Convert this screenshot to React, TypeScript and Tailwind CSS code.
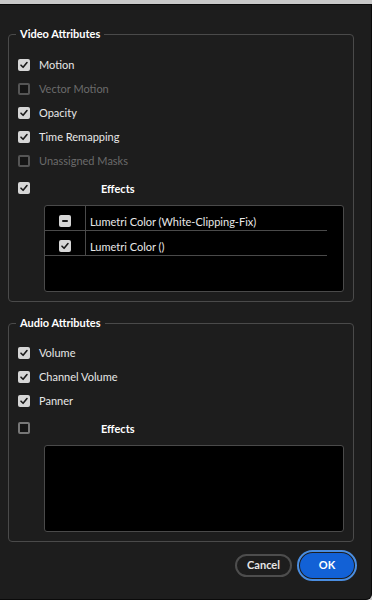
import React from "react";

type BoxState = "on" | "off" | "disabled" | "mixed";

function Box({ state }: { state: BoxState }) {
  if (state === "on" || state === "mixed") {
    return (
      <span className="flex h-[12px] w-[12px] shrink-0 items-center justify-center rounded-[2px] bg-[#d6d6d6]">
        {state === "on" ? (
          <svg width="10" height="10" viewBox="0 0 10 10" fill="none" aria-hidden="true">
            <path d="M2 5.2 L4.1 7.3 L8 2.6" stroke="#1a1a1a" strokeWidth="1.6" strokeLinecap="round" strokeLinejoin="round" />
          </svg>
        ) : (
          <span className="h-[2px] w-[6px] rounded-[1px] bg-[#1a1a1a]" />
        )}
      </span>
    );
  }
  return (
    <span
      className={
        state === "disabled"
          ? "h-[12px] w-[12px] shrink-0 rounded-[2px] border-2 border-[#555] bg-[#151515]"
          : "h-[12px] w-[12px] shrink-0 rounded-[2px] border-2 border-[#777] bg-[#151515]"
      }
    />
  );
}

function Row({ label, state }: { label: string; state: BoxState }) {
  return (
    <div className="flex h-[24px] items-center gap-[9px]">
      <Box state={state} />
      <span className={state === "disabled" ? "text-[#6b6b6b]" : "text-[#e8e8e8]"}>{label}</span>
    </div>
  );
}

function EffectsList({ items }: { items: { name: string; state: BoxState }[] }) {
  return (
    <div className="ml-[26px] mt-[5px] h-[87px] w-[300px] rounded-[3px] border border-[#4a4a4a] bg-black">
      {items.map((it) => (
        <div key={it.name} className="flex h-[25px] w-[282px] border-b border-[#4a4a4a]">
          <div className="flex w-[41px] justify-center border-r border-[#4a4a4a] pt-[9px]">
            <Box state={it.state} />
          </div>
          <div className="pl-[4px] pt-[8px] leading-[16px] text-[#e8e8e8]">{it.name}</div>
        </div>
      ))}
    </div>
  );
}

function Group({
  title,
  rows,
  effectsState,
  effects,
  first,
}: {
  title: string;
  rows: { label: string; state: BoxState }[];
  effectsState: BoxState;
  effects: { name: string; state: BoxState }[];
  first?: boolean;
}) {
  return (
    <fieldset
      className={
        "w-[346px] rounded-[4px] border border-[#4a4a4a] pb-[9px] pl-[9px] " +
        (first ? "mt-[21px]" : "mt-[13px]")
      }
    >
      <legend className="-ml-[2px] px-[4px] font-bold leading-[16px] text-white">{title}</legend>
      <div className={first ? "pt-[11px]" : "pt-[10px]"}>
        {rows.map((r) => (
          <Row key={r.label} label={r.label} state={r.state} />
        ))}
        <div className="mt-[3px] flex h-[24px] items-center">
          <Box state={effectsState} />
          <span className="ml-[71px] pt-[3px] font-bold text-white">Effects</span>
        </div>
        <EffectsList items={effects} />
      </div>
    </fieldset>
  );
}

export default function App() {
  return (
    <div
      className="h-[600px] w-[372px] overflow-hidden bg-[#c9c9c9] text-[11px]"
      style={{ fontFamily: "Lato, 'Open Sans', sans-serif" }}
    >
      <div className="h-[4px]" />
      <div className="flex h-[596px] w-[372px] flex-col rounded-br-[6px] border-b border-r border-t border-[#0a0a0a] bg-[#1d1d1d] pl-[8px]">
        <Group
          first
          title="Video Attributes"
          rows={[
            { label: "Motion", state: "on" },
            { label: "Vector Motion", state: "disabled" },
            { label: "Opacity", state: "on" },
            { label: "Time Remapping", state: "on" },
            { label: "Unassigned Masks", state: "disabled" },
          ]}
          effectsState="on"
          effects={[
            { name: "Lumetri Color (White-Clipping-Fix)", state: "mixed" },
            { name: "Lumetri Color ()", state: "on" },
          ]}
        />
        <Group
          title="Audio Attributes"
          rows={[
            { label: "Volume", state: "on" },
            { label: "Channel Volume", state: "on" },
            { label: "Panner", state: "on" },
          ]}
          effectsState="off"
          effects={[]}
        />
        <div className="mt-[8px] flex items-center justify-end gap-[5px] pr-[14px]">
          <button className="h-[23px] w-[57px] rounded-full border-2 border-[#4d4d4d] font-bold text-[#e6e6e6]">
            Cancel
          </button>
          <div className="rounded-full border-2 border-[#4a8de0] p-[1px]">
            <button className="block h-[25px] w-[54px] rounded-full bg-[#1261d6] font-bold text-white">OK</button>
          </div>
        </div>
      </div>
    </div>
  );
}
